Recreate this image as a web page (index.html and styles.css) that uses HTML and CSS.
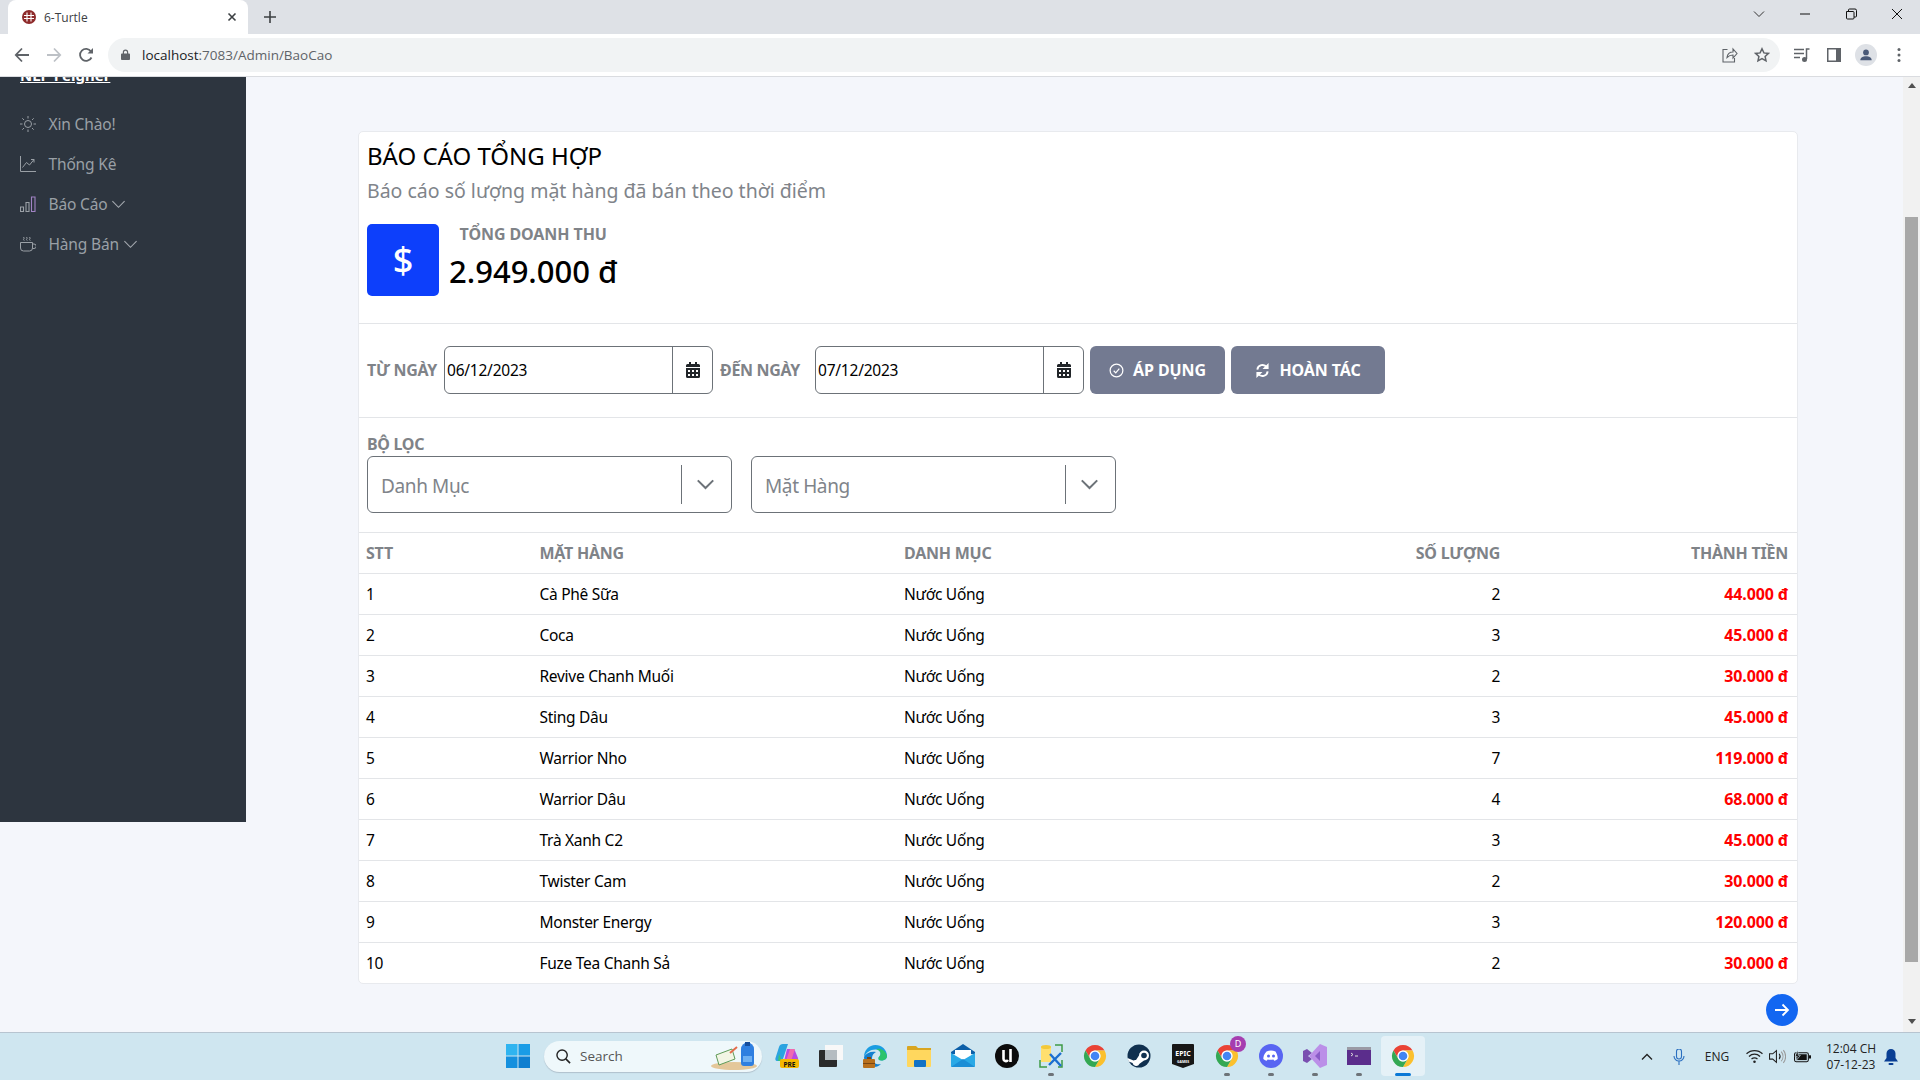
FILE: index.html
```html
<!DOCTYPE html>
<html lang="vi">
<head>
<meta charset="utf-8">
<title>6-Turtle</title>
<link rel="stylesheet" href="styles.css">
</head>
<body>
<svg class="defs" width="0" height="0" aria-hidden="true">
  <symbol id="chrome" viewBox="0 0 24 24">
    <path fill="#ea4335" d="M2.47 6.5A11 11 0 0 1 21.53 6.5H12A5.5 5.5 0 0 0 7.24 14.75Z"/>
    <path fill="#fbc02d" d="M21.53 6.5A11 11 0 0 1 12 23L16.76 14.75A5.5 5.5 0 0 0 12 6.5Z"/>
    <path fill="#34a853" d="M12 23A11 11 0 0 1 2.47 6.5L7.24 14.75A5.5 5.5 0 0 0 16.76 14.75Z"/>
    <circle cx="12" cy="12" r="5.5" fill="#fff"/><circle cx="12" cy="12" r="4.3" fill="#4285f4"/>
  </symbol>
  <symbol id="cal" viewBox="0 0 14 16">
    <path fill="#212529" d="M3 0h2v2h4V0h2v2h1.500A1.500 1.500 0 0 1 14 3.500V5H0V3.500A1.500 1.500 0 0 1 1.500 2H3ZM0 6h14v8.500a1.500 1.500 0 0 1-1.500 1.500h-11A1.500 1.500 0 0 1 0 14.500Z"/>
    <path fill="#fff" d="M2 8h2v2H2ZM6 8h2v2H6ZM10 8h2v2h-2ZM2 12h2v2H2ZM6 12h2v2H6ZM10 12h2v2h-2Z"/>
  </symbol>
  <symbol id="chev" viewBox="0 0 16 16">
    <path fill="none" stroke="currentColor" stroke-width="1.200" d="M1.500 4.500 8 11l6.500-6.500"/>
  </symbol>
  <symbol id="chev-bold" viewBox="0 0 16 16">
    <path fill="none" stroke="currentColor" stroke-width="1.700" d="M1.500 4.500 8 11l6.500-6.500"/>
  </symbol>
</svg>

<div class="tabstrip">
  <div class="tab">
    <svg class="favicon" viewBox="0 0 16 16"><circle cx="8" cy="8" r="7" fill="#8e2a2a"/><path fill="none" stroke="#fff" stroke-width="1.100" d="M3 6.500h10M3 9.500h10M6 3.500v9M10 3.500v9"/></svg>
    <span class="tab-title">6-Turtle</span>
    <svg class="tab-close" viewBox="0 0 10 10"><path stroke="#3c4043" stroke-width="1.600" d="M1.500 1.500l7 7M8.500 1.500l-7 7"/></svg>
  </div>
  <svg class="new-tab" viewBox="0 0 12 12"><path stroke="#3c4043" stroke-width="1.600" d="M6 0v12M0 6h12"/></svg>
  <div class="win">
    <svg class="win-ic" viewBox="0 0 12 12"><path fill="none" stroke="#333" d="M1 3.500l5 5 5-5"/></svg>
    <svg class="win-ic" viewBox="0 0 12 12"><path stroke="#111" d="M1 6h10"/></svg>
    <svg class="win-ic" viewBox="0 0 12 12"><path fill="none" stroke="#111" d="M1.500 3.500h6.500a1 1 0 0 1 1 1V10a1 1 0 0 1-1 1H2.500a1 1 0 0 1-1-1ZM3.500 3.500V2a1 1 0 0 1 1-1h5.500a1.500 1.500 0 0 1 1.500 1.500V8a1 1 0 0 1-1 1H9"/></svg>
    <svg class="win-ic" viewBox="0 0 12 12"><path stroke="#111" d="M1 1l10 10M11 1L1 11"/></svg>
  </div>
</div>

<div class="toolbar">
  <svg class="nav-ic" viewBox="0 0 16 16"><path fill="none" stroke="#5f6368" stroke-width="1.800" d="M15 8H2M8 1.500 1.800 8 8 14.500"/></svg>
  <svg class="nav-ic" viewBox="0 0 16 16"><path fill="none" stroke="#bdc1c6" stroke-width="1.800" d="M1 8h13M8 1.500 14.200 8 8 14.500"/></svg>
  <svg class="nav-ic" viewBox="0 0 16 16"><path fill="none" stroke="#5f6368" stroke-width="1.800" d="M13.500 10.500A6 6 0 1 1 13 4.500"/><path fill="#5f6368" d="M15 1v5.500H9.500Z"/></svg>
  <div class="omnibox">
    <svg class="lock" viewBox="0 0 10 12"><path fill="#5f6368" d="M2 5V3.500a3 3 0 0 1 6 0V5h1a1 1 0 0 1 1 1v5a1 1 0 0 1-1 1H1a1 1 0 0 1-1-1V6a1 1 0 0 1 1-1ZM3.300 5h3.400V3.500a1.700 1.700 0 0 0-3.400 0Z"/></svg>
    <span class="url"><span class="url-host">localhost</span>:7083/Admin/BaoCao</span>
    <svg class="omni-ic share" viewBox="0 0 16 16"><path fill="none" stroke="#5f6368" stroke-width="1.100" d="M5.500 2.500H1v12.500h11.500V11M5 10.500C5.500 7 8 5 11 5V2l4 4.500-4 4.500V8C8.500 8 6.500 9 5 10.500Z"/></svg>
    <svg class="omni-ic star" viewBox="0 0 16 16"><path fill="none" stroke="#5f6368" stroke-width="1.500" d="M8 1.800l1.900 4.100 4.500.5-3.300 3 .9 4.400L8 11.600l-4 2.200.9-4.400-3.300-3 4.500-.5Z"/></svg>
  </div>
  <svg class="tool-ic" viewBox="0 0 16 16"><path fill="none" stroke="#5f6368" stroke-width="1.500" d="M0 2.500h10M0 6.500h10M0 10.500h6M12.500 12V2h3"/><circle cx="10.500" cy="12.500" r="2.500" fill="#5f6368"/></svg>
  <svg class="tool-ic" viewBox="0 0 16 16"><path fill="#5f6368" d="M1 1h14v14H1Z"/><path fill="#fff" d="M2.500 2.500h7.500v11H2.500Z"/></svg>
  <div class="avatar"><svg viewBox="0 0 16 16"><circle cx="8" cy="5" r="3.300" fill="#4a5a78"/><path fill="#4a5a78" d="M1.500 14c0-3 3-4.500 6.500-4.500s6.500 1.500 6.500 4.500Z"/></svg></div>
  <svg class="tool-ic dots" viewBox="0 0 4 16"><circle cx="2" cy="2.500" r="1.500" fill="#5f6368"/><circle cx="2" cy="8" r="1.500" fill="#5f6368"/><circle cx="2" cy="13.500" r="1.500" fill="#5f6368"/></svg>
</div>

<div class="viewport">
  <aside class="sidebar">
    <a class="brand" href="#">NLP Feigner</a>
    <nav class="menu">
      <a class="menu-item" href="#">
        <svg class="menu-ic" viewBox="0 0 16 16"><g fill="none" stroke="currentColor"><circle cx="8" cy="8" r="3.500"/><path d="M8 0v2.500M8 13.500V16M0 8h2.500M13.500 8H16M2.300 2.300 4 4M12 12l1.700 1.700M13.700 2.300 12 4M4 12l-1.700 1.700"/></g></svg>
        <span>Xin Chào!</span>
      </a>
      <a class="menu-item" href="#">
        <svg class="menu-ic" viewBox="0 0 16 16"><path fill="none" stroke="currentColor" d="M.5 0v15.500H16M2.500 11.500l4-5 3 2.500 4.500-5.500M11 3.500h3v3"/></svg>
        <span>Thống Kê</span>
      </a>
      <a class="menu-item" href="#">
        <svg class="menu-ic" viewBox="0 0 16 16"><g fill="none" stroke-width="1.100"><path stroke="#9aa0a6" d="M.5 11h3v4.500h-3Z"/><path stroke="#9aa0a6" d="M6 6.500h3v9H6Z"/><path stroke="#a183c4" d="M11.500 1H15v14.500h-3.500Z"/></g></svg>
        <span>Báo Cáo</span>
        <svg class="chev" viewBox="0 0 16 16"><use href="#chev"/></svg>
      </a>
      <a class="menu-item" href="#">
        <svg class="menu-ic" viewBox="0 0 16 16"><path fill="none" stroke="currentColor" d="M.5 6.500h12V12a3 3 0 0 1-3 3h-6a3 3 0 0 1-3-3ZM12.500 8H14a1.500 1.500 0 0 1 0 4.500h-1.500M3.500 1l.7 1.200-.7 1.200.7 1.200M6.500 1l.7 1.200-.7 1.200.7 1.200M9.500 1l.7 1.200-.7 1.200.7 1.200"/></svg>
        <span>Hàng Bán</span>
        <svg class="chev" viewBox="0 0 16 16"><use href="#chev"/></svg>
      </a>
    </nav>
  </aside>

  <main class="main">
    <section class="card">
      <header class="card-head">
        <h1 class="title">BÁO CÁO TỔNG HỢP</h1>
        <p class="subtitle">Báo cáo số lượng mặt hàng đã bán theo thời điểm</p>
        <div class="stat">
          <div class="stat-icon">$</div>
          <div class="stat-text">
            <span class="stat-label">TỔNG DOANH THU</span>
            <span class="stat-value">2.949.000 đ</span>
          </div>
        </div>
      </header>

      <div class="date-row">
        <span class="field-label">TỪ NGÀY</span>
        <div class="date-input"><span class="date-value">06/12/2023</span><span class="date-btn"><svg class="cal" viewBox="0 0 14 16"><use href="#cal"/></svg></span></div>
        <span class="field-label field-label-to">ĐẾN NGÀY</span>
        <div class="date-input"><span class="date-value">07/12/2023</span><span class="date-btn"><svg class="cal" viewBox="0 0 14 16"><use href="#cal"/></svg></span></div>
        <button class="btn btn-apply">
          <svg class="btn-ic" viewBox="0 0 16 16"><circle cx="8" cy="8" r="6.800" fill="none" stroke="#fff" stroke-width="1.300"/><path fill="none" stroke="#fff" stroke-width="1.300" d="M5 8.300l2.200 2.200L11 6"/></svg>
          ÁP DỤNG
        </button>
        <button class="btn btn-reset">
          <svg class="btn-ic" viewBox="0 0 16 16"><path fill="none" stroke="#fff" stroke-width="2" d="M2.500 7A5.500 5.500 0 0 1 12.500 4.500M13.500 9A5.500 5.500 0 0 1 3.500 11.500"/><path fill="#fff" d="M14.500 0v6.500H8ZM1.500 16V9.500H8Z"/></svg>
          HOÀN TÁC
        </button>
      </div>

      <div class="filter">
        <div class="filter-label">BỘ LỌC</div>
        <div class="filter-row">
          <div class="select"><span class="select-text">Danh Mục</span><span class="select-sep"></span><svg class="select-chev" viewBox="0 0 16 16"><use href="#chev-bold"/></svg></div>
          <div class="select"><span class="select-text">Mặt Hàng</span><span class="select-sep"></span><svg class="select-chev" viewBox="0 0 16 16"><use href="#chev-bold"/></svg></div>
        </div>
      </div>

      <table class="report">
        <colgroup><col class="c1"><col class="c2"><col class="c3"><col class="c4"><col class="c5"></colgroup>
        <thead><tr><th>STT</th><th>MẶT HÀNG</th><th>DANH MỤC</th><th class="num">SỐ LƯỢNG</th><th class="num last">THÀNH TIỀN</th></tr></thead>
        <tbody>
          <tr><td>1</td><td>Cà Phê Sữa</td><td>Nước Uống</td><td class="num">2</td><td class="num last money">44.000 đ</td></tr>
          <tr><td>2</td><td>Coca</td><td>Nước Uống</td><td class="num">3</td><td class="num last money">45.000 đ</td></tr>
          <tr><td>3</td><td>Revive Chanh Muối</td><td>Nước Uống</td><td class="num">2</td><td class="num last money">30.000 đ</td></tr>
          <tr><td>4</td><td>Sting Dâu</td><td>Nước Uống</td><td class="num">3</td><td class="num last money">45.000 đ</td></tr>
          <tr><td>5</td><td>Warrior Nho</td><td>Nước Uống</td><td class="num">7</td><td class="num last money">119.000 đ</td></tr>
          <tr><td>6</td><td>Warrior Dâu</td><td>Nước Uống</td><td class="num">4</td><td class="num last money">68.000 đ</td></tr>
          <tr><td>7</td><td>Trà Xanh C2</td><td>Nước Uống</td><td class="num">3</td><td class="num last money">45.000 đ</td></tr>
          <tr><td>8</td><td>Twister Cam</td><td>Nước Uống</td><td class="num">2</td><td class="num last money">30.000 đ</td></tr>
          <tr><td>9</td><td>Monster Energy</td><td>Nước Uống</td><td class="num">3</td><td class="num last money">120.000 đ</td></tr>
          <tr><td>10</td><td>Fuze Tea Chanh Sả</td><td>Nước Uống</td><td class="num">2</td><td class="num last money">30.000 đ</td></tr>
        </tbody>
      </table>
    </section>
  </main>

  <div class="scrollbar">
    <span class="arrow-up"></span>
    <span class="thumb"></span>
    <span class="arrow-down"></span>
  </div>

  <button class="fab" aria-label="next"><svg viewBox="0 0 16 16"><path fill="none" stroke="#fff" stroke-width="1.800" d="M1 8h13M8.500 2.500 14 8l-5.500 5.500"/></svg></button>
</div>

<footer class="taskbar">
  <div class="tb-btn">
    <svg class="tb-ic" viewBox="0 0 24 24"><path fill="#2fb4f0" d="M0 0h11.500v11.500H0Z"/><path fill="#1a9ce6" d="M12.500 0H24v11.500H12.500Z"/><path fill="#1590de" d="M0 12.500h11.500V24H0Z"/><path fill="#0f7fd0" d="M12.500 12.500H24V24H12.500Z"/></svg>
  </div>
  <div class="search">
    <svg class="search-ic" viewBox="0 0 16 16"><circle cx="6.500" cy="6.500" r="5.500" fill="none" stroke="#222" stroke-width="1.500"/><path stroke="#222" stroke-width="1.700" d="M10.500 10.500 15 15"/></svg>
    <span class="search-text">Search</span>
    <svg class="search-art" viewBox="0 0 48 30"><ellipse cx="24" cy="25" rx="23" ry="4" fill="#e4c79a"/><path fill="#f2f5e4" stroke="#5f9a57" d="M6 14l16-6 3 10-16 6Z"/><path stroke="#e46b4a" stroke-width="2" d="M20 12l7-6"/><path fill="#2f7fe0" d="M31 8a6.500 6.500 0 0 1 13 0v14a3 3 0 0 1-3 3h-7a3 3 0 0 1-3-3Z"/><path fill="#154d9c" d="M35 1h5v4h-5Z"/><path fill="#6fb0f2" d="M33 15h9v6h-9Z"/></svg>
  </div>
  <div class="tb-apps">
    <div class="tb-btn">
      <svg class="tb-ic" viewBox="0 0 24 24"><path fill="#2aa3e0" d="M8 0h5L8 15c-.5 1.500-2 2-3 2H2C.5 17 0 15.500.5 14L4 3c.5-2 2-3 4-3Z"/><path fill="#3bc476" d="M4 10l3 7H3Z"/><path fill="#b84de0" d="M12 5h5c2 0 3 1 3.500 3L23 14c.5 2-.5 3-2 3H9Z"/><path fill="#f06ab0" d="M15 5h5l-4 12h-5Z"/><rect x="5" y="15" width="19" height="9" rx="2" fill="#f5b800"/><text class="pre" x="14.500" y="22.500">PRE</text></svg>
    </div>
    <div class="tb-btn">
      <svg class="tb-ic" viewBox="0 0 24 24"><rect x="6" y="1" width="18" height="15" fill="#f8f8f8"/><rect x="0" y="6" width="18" height="17" rx="1" fill="#2b2b2b"/><rect x="6" y="6" width="12" height="10" fill="#b5bcc1"/></svg>
    </div>
    <div class="tb-btn">
      <svg class="tb-ic" viewBox="0 0 24 24"><path fill="#1b9de2" d="M1 13C1 6 6 1 12.500 1 18.500 1 24 5.500 24 12c0 3-3 4.500-5.500 4.500-2.500 0-3-1-3-2 0-2 2-2 2-5 0-2.500-2.500-4-5-4C7 5.500 3 9 1 13Z"/><path fill="#2cc36b" d="M13 5c4-1 10 1 11 7 0 3-3 4.500-5.500 4.500-2.500 0-3-1-3-2 0-2 2-2 2-5 0-2-2-4-4.500-4.500Z"/><path fill="#1480d0" d="M1 13c0 5 4 10 10 10 3 0 5-1 7-3-5 1-9-1-9-6 0-3 2-5 4-6C8 7 3 9 1 13Z"/><rect x="0" y="15" width="12" height="9" rx="1" fill="#b8701d"/><path fill="#7a4510" d="M4 13h4v2H4ZM0 19h12v1H0Z"/></svg>
    </div>
    <div class="tb-btn">
      <svg class="tb-ic" viewBox="0 0 24 24"><path fill="#d9a520" d="M0 3a1 1 0 0 1 1-1h8l2 2h13v3H0Z"/><path fill="#ffd75e" d="M0 6h24v16a1 1 0 0 1-1 1H1a1 1 0 0 1-1-1Z"/><rect x="7" y="16" width="12" height="7" rx="1" fill="#1272c4"/></svg>
    </div>
    <div class="tb-btn">
      <svg class="tb-ic" viewBox="0 0 24 24"><path fill="#0c5fa8" d="M12 0 24 8v2H0V8Z"/><path fill="#fff" d="M4 6h16v9H4Z"/><path fill="#2aa9e6" d="M0 9l12 7 12-7v13a1 1 0 0 1-1 1H1a1 1 0 0 1-1-1Z"/><path fill="#1b8ed6" d="M0 23 12 15l12 8Z"/></svg>
    </div>
    <div class="tb-btn">
      <svg class="tb-ic" viewBox="0 0 24 24"><circle cx="12" cy="12" r="12" fill="#0c0c0c"/><path fill="none" stroke="#fff" stroke-width="2.600" d="M8.500 6v9c0 2 3 3 4.500 1M15.500 5v13"/></svg>
    </div>
    <div class="tb-btn running">
      <svg class="tb-ic" viewBox="0 0 24 24"><path fill="#ffdf6e" d="M2 2h10v16H2Z"/><ellipse cx="7" cy="3" rx="5" ry="2" fill="#f3c93b"/><path fill="none" stroke="#3f9a45" stroke-width="1.500" d="M16 1h7v7M1 16v7h7M23 16v7h-4"/><path stroke="#1c6fd0" stroke-width="2.400" d="M10 21 22 9M11 10l11 12"/></svg>
    </div>
    <div class="tb-btn"><svg class="tb-ic" viewBox="0 0 24 24"><use href="#chrome"/></svg></div>
    <div class="tb-btn">
      <svg class="tb-ic" viewBox="0 0 24 24"><circle cx="12" cy="12" r="11.500" fill="#10304f"/><path fill="#fff" d="M.5 14l6 2.500a3.500 3.500 0 0 1 2.500-.5l3-4.500a5 5 0 1 1 5 5l-4.500 3.200A3.700 3.700 0 0 1 5.500 19L1.700 17.500Z"/><circle cx="17" cy="11.500" r="2.800" fill="#10304f"/></svg>
    </div>
    <div class="tb-btn">
      <svg class="tb-ic" viewBox="0 0 24 24"><path fill="#171717" d="M2 0h20a1 1 0 0 1 1 1v19l-11 4-11-4V1a1 1 0 0 1 1-1Z"/><text class="epic" x="12" y="12">EPIC</text><text class="games" x="12" y="18.500">GAMES</text></svg>
    </div>
    <div class="tb-btn running">
      <svg class="tb-ic" viewBox="0 0 24 24"><use href="#chrome"/></svg>
      <span class="tb-badge">D</span>
    </div>
    <div class="tb-btn running">
      <svg class="tb-ic" viewBox="0 0 24 24"><circle cx="12" cy="12" r="12" fill="#5865f2"/><path fill="#fff" d="M7.500 7.500c3-1.200 6-1.200 9 0 1.500 2.500 2.300 5 2.200 7.500-1.200 1-2.400 1.500-3.500 1.700l-.8-1.300c-2 .5-3.800.5-5.800 0l-.8 1.300C6.700 16.500 5.500 16 4.300 15c0-2.500.7-5 3.200-7.500Z"/><circle cx="9.500" cy="12" r="1.500" fill="#5865f2"/><circle cx="14.500" cy="12" r="1.500" fill="#5865f2"/></svg>
    </div>
    <div class="tb-btn running">
      <svg class="tb-ic" viewBox="0 0 24 24"><path fill="#7a4fb0" d="M0 7l4-2 5 4-4 3 4 3-5 4-4-2Z"/><path fill="#bb8fe8" d="M17 0l7 3v18l-7 3-11-12Z"/><path fill="#8a5cc8" d="M17 7v10l-5-5Z"/></svg>
    </div>
    <div class="tb-btn running">
      <svg class="tb-ic" viewBox="0 0 24 24"><rect x="0" y="3" width="24" height="18" fill="#5b2d8c"/><rect x="0" y="3" width="24" height="3" fill="#9a9aa5"/><path fill="none" stroke="#ddd" d="M4 9l2 1.500L4 12M8 12h3"/></svg>
    </div>
    <div class="tb-btn active">
      <svg class="tb-ic" viewBox="0 0 24 24"><use href="#chrome"/></svg>
    </div>
  </div>
  <div class="tray">
    <svg class="tray-ic caret" viewBox="0 0 12 12"><path fill="none" stroke="#222" stroke-width="1.300" d="M1 8.500 6 3.500l5 5"/></svg>
    <svg class="tray-ic mic" viewBox="0 0 16 16"><rect x="5.500" y="0" width="5" height="10" rx="2.500" fill="none" stroke="#2a6fc0" stroke-width="1.100"/><path fill="none" stroke="#2a6fc0" stroke-width="1.100" d="M3 7a5 5 0 0 0 10 0M8 12v4"/></svg>
    <span class="eng">ENG</span>
    <svg class="tray-ic wifi" viewBox="0 0 16 14"><path fill="none" stroke="#222" stroke-width="1.200" d="M.5 4.500c4-4 11-4 15 0M2.800 7c3-2.800 7.400-2.800 10.400 0M5.200 9.500c1.600-1.300 4-1.300 5.600 0"/><circle cx="8" cy="12" r="1.200" fill="#222"/></svg>
    <svg class="tray-ic vol" viewBox="0 0 16 14"><path fill="none" stroke="#222" d="M.5 4.500h3L7 1.500v11l-3.500-3h-3Z"/><path fill="none" stroke="#222" d="M9.500 4.500a4 4 0 0 1 0 5"/><path fill="none" stroke="#999" d="M11.500 2.500a7 7 0 0 1 0 9M13.500 1a9.500 9.500 0 0 1 0 12"/></svg>
    <svg class="tray-ic batt" viewBox="0 0 16 12"><rect x=".5" y="2.500" width="13" height="8.500" rx="1.500" fill="none" stroke="#111"/><rect x="2" y="4" width="10" height="5.500" fill="#111"/><rect x="14" y="5" width="2" height="3" fill="#111"/><path fill="#111" stroke="#cfe6f0" stroke-width=".6" d="M3.500 0 1 6h2l-1 4 4-5H4Z"/></svg>
    <div class="clock"><span>12:04 CH</span><span>07-12-23</span></div>
    <svg class="tray-ic bell" viewBox="0 0 14 16"><path fill="#0a3f94" d="M7 0a4.500 4.500 0 0 1 4.500 4.500V9l2.500 3.500H0L2.500 9V4.500A4.500 4.500 0 0 1 7 0Z"/><rect x="4.500" y="14" width="5" height="2" rx="1" fill="#0a3f94"/></svg>
  </div>
</footer>
</body>
</html>
```
FILE: styles.css
```css
* { box-sizing: border-box; }
html, body { height: 100%; }
body {
  margin: 0;
  height: 1080px;
  display: flex;
  flex-direction: column;
  overflow: hidden;
  font-family: "Noto Sans", "Open Sans", sans-serif;
  letter-spacing: 0;
  background: #f4f6fb;
  color: #000;
}
.defs { position: absolute; }
svg { display: block; flex: none; }
button { font-family: inherit; letter-spacing: inherit; }

/* browser chrome */
.tabstrip { height: 34px; flex: none; background: #dee1e6; display: flex; align-items: flex-end; padding-left: 8px; font-family: "Open Sans", sans-serif; }
.tab { width: 240px; height: 34px; background: #fff; border-radius: 8px 8px 0 0; display: flex; align-items: center; padding: 0 0 0 13px; }
.favicon { width: 16px; height: 16px; }
.tab-title { font-size: 12px; color: #3c4043; margin-left: 7px; flex: 1; }
.tab-close { width: 10px; height: 10px; margin-right: 11px; }
.new-tab { width: 12px; height: 12px; margin: 0 0 11px 16px; }
.win { margin-left: auto; display: flex; height: 34px; align-items: center; }
.win-ic { width: 12px; height: 12px; margin: 0 17px; position: relative; top: -3px; }
.toolbar { height: 43px; flex: none; background: #fff; border-bottom: 1px solid #dadce0; display: flex; align-items: center; padding: 0 0 1px 14px; }
.nav-ic { width: 16px; height: 16px; margin-right: 16px; }
.omnibox { width: 1672px; height: 34px; margin-left: -2px; border-radius: 17px; background: #f1f3f4; display: flex; align-items: center; padding-left: 13px; margin-right: 6px; font-family: "Open Sans", sans-serif; }
.lock { width: 9px; height: 11px; }
.url { font-size: 13.500px; color: #5f6368; margin-left: 12px; flex: 1; }
.url-host { color: #202124; }
.omni-ic { width: 16px; height: 16px; margin-right: 16px; }
.star { margin-right: 10px; }
.tool-ic { width: 16px; height: 16px; margin: 0 8px; }
.avatar { width: 22px; height: 22px; margin: 0 5px; border-radius: 50%; background: #dee1e6; padding: 4px; }
.avatar svg { width: 14px; height: 14px; }
.dots { width: 4px; margin: 0 0 0 15px; }

/* page */
.viewport { height: 955px; flex: none; display: flex; position: relative; overflow: hidden; }
.sidebar { width: 246px; height: 745px; flex: none; background: #2d353f; padding: 0 20px; }
.brand { display: block; height: 29px; margin-top: -13px; font-size: 15px; font-weight: 700; color: #fff; line-height: 22px; }
.menu { display: flex; flex-direction: column; margin-top: 11px; }
.menu-item { height: 40px; display: flex; align-items: center; color: #9aa0a6; text-decoration: none; font-size: 15.500px; letter-spacing: -0.01em; }
.menu-ic { width: 16px; height: 16px; margin-right: 12.500px; }
.chev { width: 15px; height: 15px; margin-left: 4px; color: #a4a9af; }
.main { flex: 1; min-width: 0; padding: 54px 105px 0 112px; }
.card { width: 1440px; background: #fff; border: 1px solid #e8eaee; border-radius: 5px; }
.card-head { height: 192px; padding: 4px 8px 0; border-bottom: 1px solid #e3e5e8; }
.title { margin: 0; font-size: 24px; font-weight: 400; line-height: 40px; color: #000; }
.subtitle { margin: 0; font-size: 19.500px; line-height: 30px; color: #80848a; }
.stat { display: flex; margin-top: 18px; gap: 10px; }
.stat-icon { width: 72px; height: 72px; padding-bottom: 2px; border-radius: 5px; background: #0d3ffb; color: #fff; font-size: 36px; font-weight: 500; display: flex; align-items: center; justify-content: center; }
.stat-text { display: flex; flex-direction: column; align-items: center; }
.stat-label { font-size: 16px; font-weight: 700; color: #7f8388; line-height: 20px; letter-spacing: -0.005em; }
.stat-value { font-size: 31px; font-weight: 500; line-height: 44px; margin-top: 5px; }

.date-row { height: 94px; padding: 22px 8px 0; border-bottom: 1px solid #e3e5e8; display: flex; align-items: flex-start; gap: 6px; }
.field-label { font-size: 16px; font-weight: 700; color: #7f8388; line-height: 48px; white-space: nowrap; letter-spacing: -0.02em; margin-right: 1px; }
.field-label-to { margin-right: 9px; margin-left: 1px; }
.date-input { width: 269px; height: 48px; border: 1px solid #6c7278; border-radius: 6px; display: flex; align-items: center; font-size: 15.500px; letter-spacing: -0.015em; }
.date-value { flex: 1; padding-left: 2px; }
.date-btn { width: 40px; height: 100%; border-left: 1px solid #6c7278; display: flex; align-items: center; justify-content: center; }
.cal { width: 14px; height: 16px; }
.btn { height: 48px; border: 0; border-radius: 6px; background: #737a91; color: #fff; font-size: 16px; font-weight: 700; display: flex; align-items: center; justify-content: center; gap: 9px; padding: 0; letter-spacing: -0.005em; }
.btn-apply { width: 135px; }
.btn-reset { width: 154px; }
.btn-ic { width: 15px; height: 15px; }

.filter { height: 115px; padding: 15px 8px 0; border-bottom: 1px solid #e3e5e8; }
.filter-label { font-size: 16px; font-weight: 700; color: #7f8388; line-height: 23px; letter-spacing: -0.02em; }
.filter-row { display: flex; gap: 19px; }
.select { width: 365px; height: 57px; border: 1px solid #6c7278; border-radius: 6px; display: flex; align-items: center; padding: 2px 0 0 13px; }
.select-text { flex: 1; font-size: 19px; color: #80848a; letter-spacing: -0.02em; }
.select-sep { width: 1px; height: 39px; margin-top: -2px; background: #6c7278; }
.select-chev { width: 19px; height: 19px; margin: -2px 16px 0 14px; color: #6c7278; }

.report { width: 100%; table-layout: fixed; border-collapse: separate; border-spacing: 0; font-size: 15.500px; letter-spacing: -0.018em; }
.c1 { width: 173.500px; } .c2 { width: 364.500px; } .c3 { width: 300px; } .c4 { width: 310px; } .c5 { width: 290px; }
.report th, .report td { height: 41px; padding: 0 7px; text-align: left; border-bottom: 1px solid #e3e5e8; font-weight: 400; }
.report th { font-weight: 700; color: #7f8388; font-size: 16px; letter-spacing: -0.015em; }
.report tbody tr:last-child td { border-bottom: 0; height: 40px; }
.report .num { text-align: right; }
.report .last { padding-right: 9px; }
.report .money { color: #f00; font-weight: 700; font-size: 16px; letter-spacing: -0.008em; }

.scrollbar { position: absolute; top: 0; right: 0; width: 17px; height: 955px; background: #f1f1f1; display: flex; flex-direction: column; align-items: center; }
.arrow-up { width: 0; height: 0; margin-top: 6px; border: 4.500px solid transparent; border-top: 0; border-bottom: 5px solid #505050; }
.thumb { width: 13px; height: 745px; margin-top: 129px; background: #a8a8a8; }
.arrow-down { width: 0; height: 0; margin-top: 57px; border: 4.500px solid transparent; border-bottom: 0; border-top: 5px solid #505050; }
.fab { position: absolute; left: 1766px; top: 917px; width: 32px; height: 32px; border: 0; border-radius: 50%; background: #1266f1; padding: 8px; }
.fab svg { width: 16px; height: 16px; }

/* taskbar */
.taskbar { height: 48px; flex: none; background: #cfe6f0; border-top: 1px solid #b7c4d0; display: flex; align-items: center; padding: 0 0 1px 496px; position: relative; }
.tb-btn { width: 44px; height: 40px; display: flex; align-items: center; justify-content: center; position: relative; flex: none; }
.tb-ic { width: 24px; height: 24px; }
.running::after { content: ""; position: absolute; left: 19px; bottom: 0; width: 6px; height: 3px; border-radius: 2px; background: #6d7378; }
.active { background: #e5f1f7; border-radius: 4px; }
.active::after { content: ""; position: absolute; left: 14px; bottom: 0; width: 16px; height: 3px; border-radius: 2px; background: #0a78d6; }
.tb-badge { position: absolute; left: 25px; top: 0; width: 16px; height: 16px; border-radius: 50%; background: #a53eb0; color: #fff; font-size: 9px; line-height: 16px; text-align: center; }
.search { width: 218px; height: 31px; margin-left: 4px; border-radius: 16px; background: #eff8fb; box-shadow: 0 1px 1px #b0c0cc; display: flex; align-items: center; padding-left: 12px; position: relative; }
.search-ic { width: 15px; height: 15px; }
.search-text { margin-left: 9px; font-size: 13.500px; color: #555; font-family: "Open Sans", sans-serif; }
.search-art { position: absolute; right: 4px; top: 0; width: 48px; height: 30px; }
.tb-apps { display: flex; margin-left: 3px; }
.pre { font-size: 6.500px; font-weight: 700; fill: #111; text-anchor: middle; }
.epic { font-size: 7px; font-weight: 700; fill: #fff; text-anchor: middle; }
.games { font-size: 3.500px; font-weight: 700; fill: #fff; text-anchor: middle; }
.tray { position: absolute; left: 1637px; top: 0; height: 47px; display: flex; align-items: center; font-family: "Open Sans", sans-serif; }
.caret { width: 12px; margin: 0 4px; }
.mic { width: 16px; margin: 0 2px 0 14px; }
.eng { width: 32px; margin-left: 12px; font-size: 12px; text-align: center; color: #222; }
.wifi { width: 17px; margin-left: 13px; }
.vol { width: 17px; margin-left: 6px; }
.batt { width: 17px; margin-left: 8px; }
.clock { width: 60px; margin-left: 10px; display: flex; flex-direction: column; align-items: center; font-size: 12px; line-height: 16px; color: #222; }
.bell { width: 14px; margin-left: 3px; }
```
